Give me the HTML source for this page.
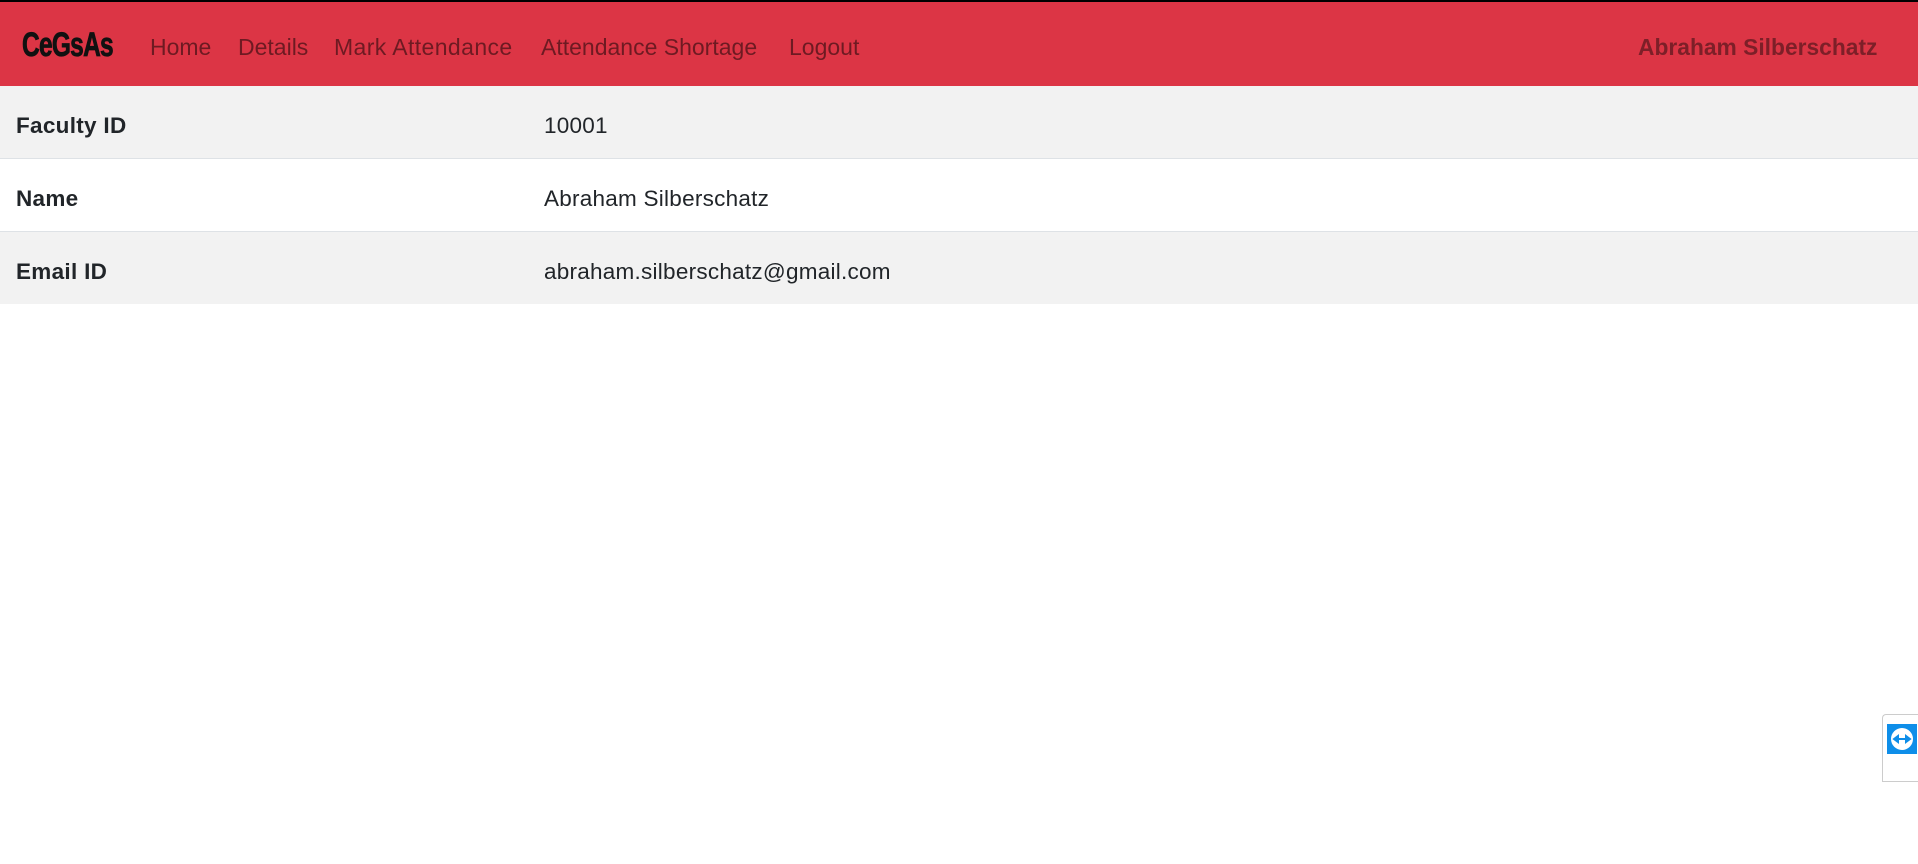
<!DOCTYPE html>
<html><head><meta charset="utf-8"><style>
html,body{margin:0;padding:0;width:1918px;height:864px;background:#fff;overflow:hidden;font-family:"Liberation Sans",sans-serif;}
.top{height:2px;background:#000;}
nav{position:relative;height:84px;background:#dc3545;}
.brand{position:absolute;left:22px;top:25px;font-weight:bold;font-size:34px;color:#111;line-height:36px;letter-spacing:-1px;transform:scaleX(0.72);transform-origin:left center;-webkit-text-stroke:0.8px #111;}
.lnk{position:absolute;top:31px;font-size:23px;line-height:28px;color:rgba(0,0,0,.5);white-space:nowrap;}
.user{position:absolute;left:1638px;top:31px;font-size:22.8px;font-weight:bold;color:#7d1f28;line-height:28px;}
.row{position:relative;height:72px;border-bottom:1px solid #dee2e6;}
.row.g{background:#f2f2f2;}
.row .l{position:absolute;left:16px;top:27px;font-size:22.5px;font-weight:bold;color:#212529;letter-spacing:0.3px;}
.row .v{position:absolute;left:544px;top:27px;font-size:22.5px;color:#212529;letter-spacing:0.25px;}
.tv{position:absolute;left:1882px;top:714px;width:40px;height:66px;border:1px solid #ccc;border-right:none;border-radius:4px 0 0 0;background:#fff;}
.tv .sq{position:absolute;left:4px;top:9px;width:30px;height:30px;background:#0e8ee9;}
</style></head><body>
<div class="top"></div>
<nav>
<div class="brand">CeGsAs</div>
<span class="lnk" style="left:150px">Home</span>
<span class="lnk" style="left:238px">Details</span>
<span class="lnk" style="left:334px;letter-spacing:0.4px">Mark Attendance</span>
<span class="lnk" style="left:541px">Attendance Shortage</span>
<span class="lnk" style="left:789px">Logout</span>
<span class="user">Abraham Silberschatz</span>
</nav>
<div class="row g"><span class="l">Faculty ID</span><span class="v">10001</span></div>
<div class="row"><span class="l">Name</span><span class="v">Abraham Silberschatz</span></div>
<div class="row g" style="border-bottom:none"><span class="l">Email ID</span><span class="v">abraham.silberschatz@gmail.com</span></div>
<div class="tv"><div class="sq"><svg width="30" height="30" viewBox="0 0 30 30"><circle cx="15" cy="15" r="11" fill="#fff"/><path d="M7 15h16M7 15l4-3v6zM23 15l-4-3v6z" stroke="#0e8ee9" stroke-width="2" fill="#0e8ee9"/></svg></div></div>
</body></html>
